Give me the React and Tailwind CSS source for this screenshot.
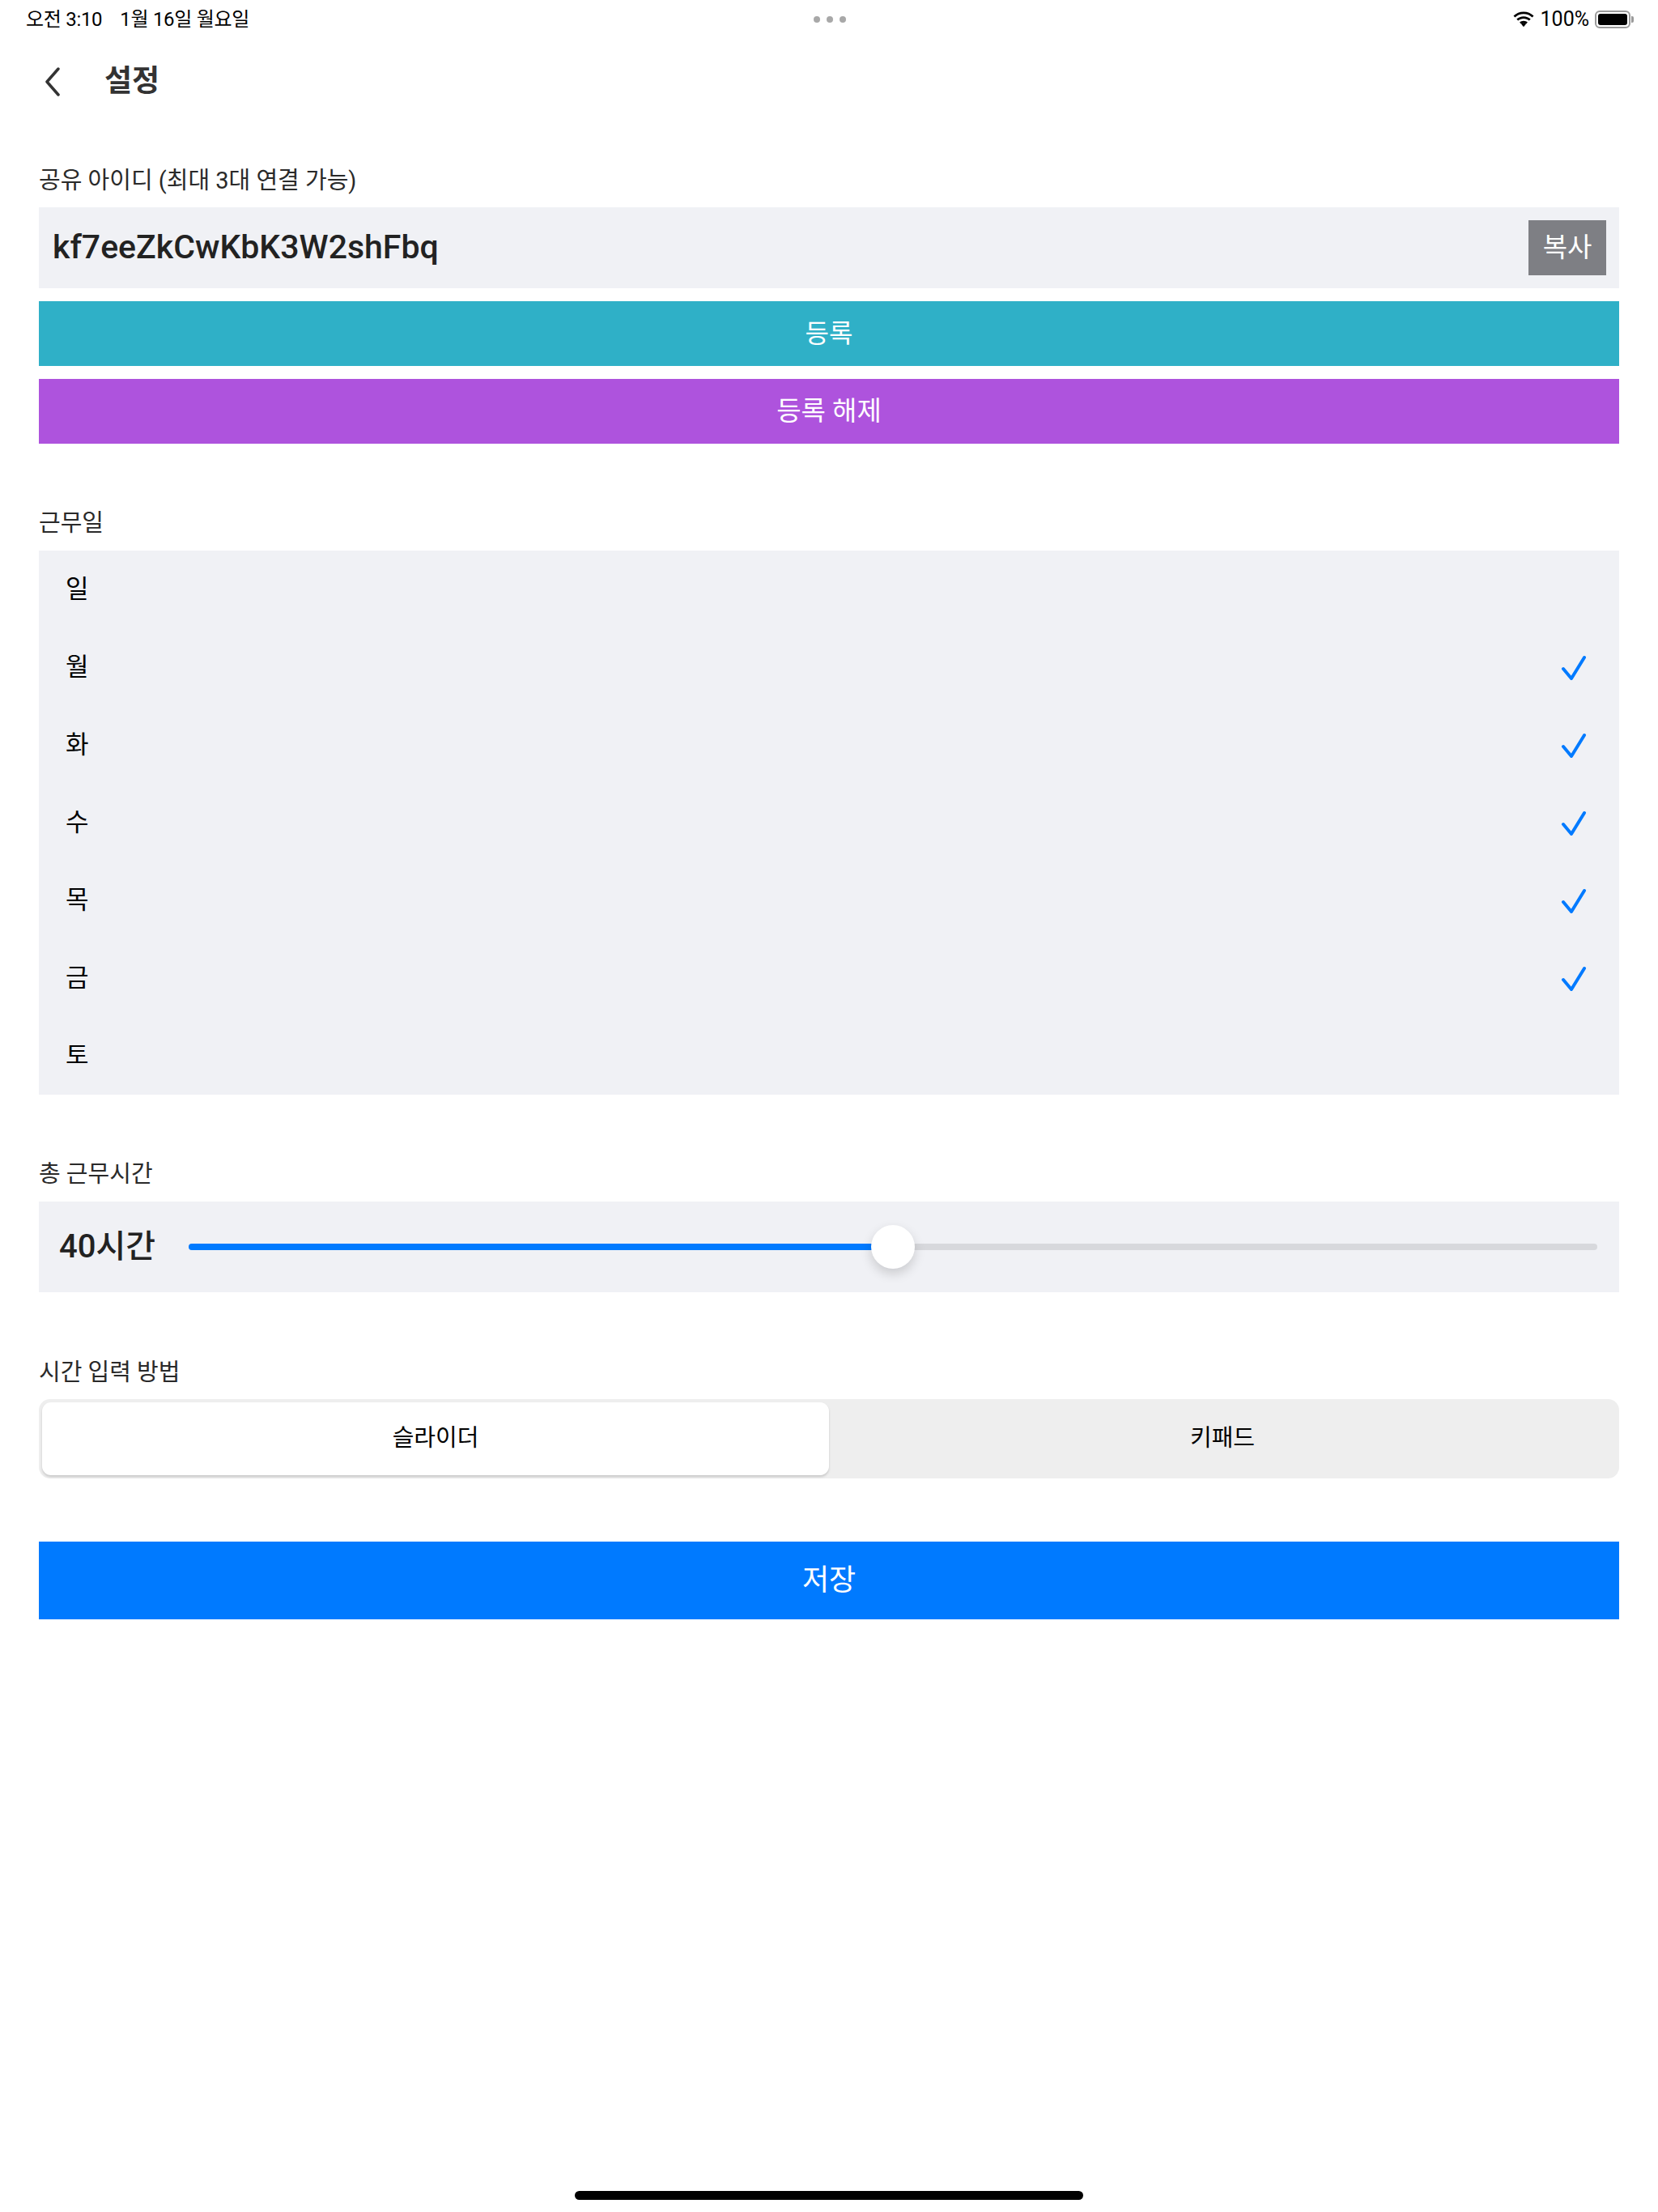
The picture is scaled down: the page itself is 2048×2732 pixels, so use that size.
import React from "react";

const days = [
  { d: "일", on: false },
  { d: "월", on: true },
  { d: "화", on: true },
  { d: "수", on: true },
  { d: "목", on: true },
  { d: "금", on: true },
  { d: "토", on: false },
];

function Check() {
  return (
    <svg width="32" height="31" viewBox="0 0 32 31" fill="none">
      <path d="M3 17 L13 29 L29 3" stroke="#007aff" strokeWidth="4" strokeLinecap="round" strokeLinejoin="round" />
    </svg>
  );
}

function Wifi() {
  return (
    <svg width="26" height="20" viewBox="0 0 26 20" fill="#000">
      <path d="M13 3.2c4.1 0 7.8 1.6 10.6 4.2l1.9-2C22.2 2.3 17.8 0.4 13 0.4S3.8 2.3 0.5 5.4l1.9 2C5.2 4.8 8.9 3.2 13 3.2z" />
      <path d="M13 9c2.6 0 5 1 6.8 2.6l1.9-2C19.4 7.5 16.4 6.2 13 6.2s-6.4 1.3-8.7 3.4l1.9 2C8 10 10.4 9 13 9z" />
      <path d="M13 14.6c1.1 0 2.1.4 2.9 1.1L13 19.2l-2.9-3.5c.8-.7 1.8-1.1 2.9-1.1z" />
      <path d="M13 11.8c1.9 0 3.6.7 4.9 1.8l-1.9 2.2c-.8-.7-1.9-1.1-3-1.1s-2.2.4-3 1.1l-1.9-2.2c1.3-1.1 3-1.8 4.9-1.8z" />
    </svg>
  );
}

export default function App() {
  return (
    <div className="relative flex min-h-[2732px] w-[2048px] flex-col bg-white font-['Roboto','Noto_Sans_CJK_KR',sans-serif] text-[#222]">
      {/* status bar */}
      <div className="grid h-[48px] grid-cols-[1fr_auto_1fr] items-center pl-[32px] pr-[30px] text-[24px] text-black">
        <div className="flex items-center gap-[22px] tracking-[-0.3px]">
          <span>오전 3:10</span>
          <span>1월 16일 월요일</span>
        </div>
        <div className="flex items-center gap-[8px]">
          <span className="h-[8px] w-[8px] rounded-full bg-[#a8a8a8]" />
          <span className="h-[8px] w-[8px] rounded-full bg-[#a8a8a8]" />
          <span className="h-[8px] w-[8px] rounded-full bg-[#a8a8a8]" />
        </div>
        <div className="flex items-center justify-end">
          <Wifi />
          <span className="ml-[8px] text-[25px]">100%</span>
          <div className="ml-[7px] flex items-center">
            <div className="flex h-[22px] w-[44px] items-center rounded-[6px] border-[2px] border-[#9a9a9a] p-[2px]">
              <div className="h-full w-full rounded-[3px] bg-black" />
            </div>
            <div className="ml-[1px] h-[8px] w-[3px] rounded-r-[2px] bg-[#9a9a9a]" />
          </div>
        </div>
      </div>

      {/* header */}
      <div className="flex h-[106px] items-center pl-[55px]">
        <svg width="20" height="36" viewBox="0 0 20 36" fill="none">
          <path d="M17 2 L3 18 L17 34" stroke="#333" strokeWidth="3.5" strokeLinecap="round" strokeLinejoin="round" />
        </svg>
        <span className="ml-[54px] text-[37px] font-bold text-[#333]">설정</span>
      </div>

      <div className="flex flex-col px-[48px]">
        {/* share id */}
        <div className="mt-[53px] h-[32px] text-[29px] leading-[32px] text-[#2a2a2a]">공유 아이디 (최대 3대 연결 가능)</div>
        <div className="mt-[17px] flex h-[100px] items-center justify-between bg-[#f0f1f5] pl-[17px] pr-[16px]">
          <span className="text-[41px] font-medium text-[#222]">kf7eeZkCwKbK3W2shFbq</span>
          <div className="flex h-[68px] w-[96px] items-center justify-center bg-[#7e7f84] text-[33px] text-white">복사</div>
        </div>
        <div className="mt-[16px] flex h-[80px] items-center justify-center bg-[#2fb0c7] text-[32px] text-white">등록</div>
        <div className="mt-[16px] flex h-[80px] items-center justify-center bg-[#ae53dd] text-[33px] text-white">등록 해제</div>

        {/* work days */}
        <div className="mt-[82px] h-[32px] text-[29px] leading-[32px] text-[#2a2a2a]">근무일</div>
        <div className="mt-[18px] flex flex-col bg-[#f0f1f5]">
          {days.map((x) => (
            <div key={x.d} className="flex h-[96px] items-center justify-between pl-[33px] pr-[40px]">
              <span className="text-[31px] text-black">{x.d}</span>
              {x.on ? <Check /> : null}
            </div>
          ))}
        </div>

        {/* total hours */}
        <div className="mt-[82px] h-[32px] text-[29px] leading-[32px] text-[#2a2a2a]">총 근무시간</div>
        <div className="mt-[18px] flex h-[112px] items-center bg-[#f0f1f5] pl-[25px] pr-[27px]">
          <span className="w-[160px] text-[40px] font-medium text-[#222]">40시간</span>
          <div className="relative flex h-[8px] flex-1 items-center">
            <div className="h-[8px] w-full rounded-full bg-[#d7d8dc]" />
            <div className="absolute left-0 top-0 h-[8px] w-[50%] rounded-l-full bg-[#007aff]" />
            <div className="absolute left-[50%] top-1/2 h-[54px] w-[54px] -translate-x-1/2 -translate-y-1/2 rounded-full bg-white shadow-[0_6px_14px_rgba(0,0,0,0.16)]" />
          </div>
        </div>

        {/* input method */}
        <div className="mt-[83px] h-[32px] text-[29px] leading-[32px] text-[#2a2a2a]">시간 입력 방법</div>
        <div className="mt-[17px] flex h-[98px] rounded-[14px] bg-[#eeeeee] p-[4px]">
          <div className="flex flex-1 items-center justify-center rounded-[11px] bg-white text-[29px] text-black shadow-[0_2px_3px_rgba(0,0,0,0.16)]">슬라이더</div>
          <div className="flex flex-1 items-center justify-center text-[29px] text-black">키패드</div>
        </div>

        {/* save */}
        <div className="mt-[78px] flex h-[96px] items-center justify-center bg-[#007aff] text-[36px] text-white">저장</div>
      </div>

      {/* home indicator */}
      <div className="mb-[15px] mt-auto flex justify-center">
        <div className="h-[11px] w-[628px] rounded-full bg-black" />
      </div>
    </div>
  );
}
